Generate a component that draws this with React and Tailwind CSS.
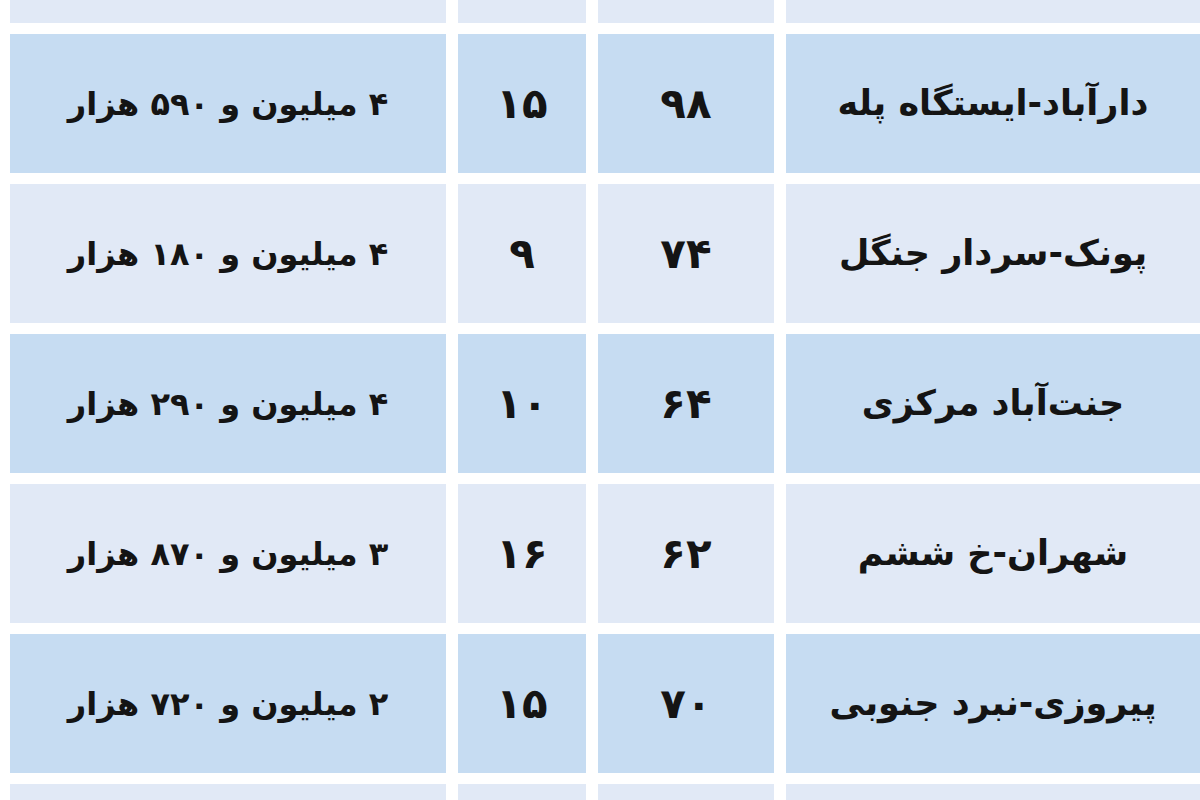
import React from "react";

const rows = [
  { name: "", area: "", age: "", price: "", tone: "light", partial: true },
  { name: "دارآباد-ایستگاه پله", area: "۹۸", age: "۱۵", price: "۴ میلیون و ۵۹۰ هزار", tone: "dark" },
  { name: "پونک-سردار جنگل", area: "۷۴", age: "۹", price: "۴ میلیون و ۱۸۰ هزار", tone: "light" },
  { name: "جنت‌آباد مرکزی", area: "۶۴", age: "۱۰", price: "۴ میلیون و ۲۹۰ هزار", tone: "dark" },
  { name: "شهران-خ ششم", area: "۶۲", age: "۱۶", price: "۳ میلیون و ۸۷۰ هزار", tone: "light" },
  { name: "پیروزی-نبرد جنوبی", area: "۷۰", age: "۱۵", price: "۲ میلیون و ۷۲۰ هزار", tone: "dark" },
  { name: "", area: "", age: "", price: "", tone: "light" },
];

const Cell = ({ children, tone, className = "" }) => (
  <div
    className={`flex items-center justify-center ${
      tone === "dark" ? "bg-[#c6dcf2]" : "bg-[#e1e9f6]"
    } ${className}`}
  >
    {children}
  </div>
);

const App = () => {
  return (
    <div
      dir="rtl"
      className="w-[1200px] h-[800px] overflow-hidden bg-white pl-[10px] text-[#141414] font-bold"
      style={{ fontFamily: '"DejaVu Sans", sans-serif' }}
    >
      <div className="flex flex-col gap-[11px]">
        {rows.map((row, i) => (
          <div
            key={i}
            className={`grid grid-cols-[414px_176px_128px_436px] gap-x-[12px] ${
              row.partial ? "h-[23px]" : "h-[139px]"
            }`}
          >
            <Cell tone={row.tone} className="text-[35px]">{row.name}</Cell>
            <Cell tone={row.tone} className="text-[42px]">{row.area}</Cell>
            <Cell tone={row.tone} className="text-[42px]">{row.age}</Cell>
            <Cell tone={row.tone} className="text-[32px]">{row.price}</Cell>
          </div>
        ))}
      </div>
    </div>
  );
};

export default App;
